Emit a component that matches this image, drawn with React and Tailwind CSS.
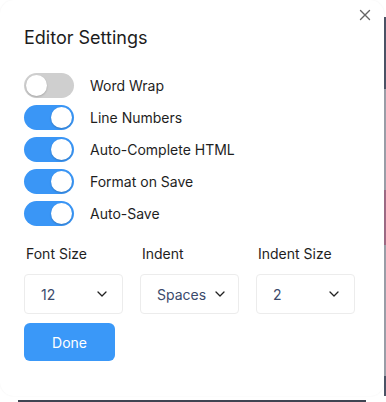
import { useState } from "react";

function Toggle({ on, onClick }) {
  return (
    <button
      type="button"
      onClick={onClick}
      className={`relative h-[25px] w-[50px] shrink-0 rounded-full transition-colors ${
        on ? "bg-[#3a96f6]" : "bg-[#cfcfcf]"
      }`}
    >
      <span
        className={`absolute top-[2px] h-[21px] w-[21px] rounded-full bg-white shadow-[0_1px_2px_rgba(0,0,0,0.2)] transition-all ${
          on ? "left-[27px]" : "left-[2px]"
        }`}
      />
    </button>
  );
}

function Chevron() {
  return (
    <svg className="shrink-0" width="12" height="12" viewBox="0 0 12 12" fill="none" stroke="#222" strokeWidth="1.3" strokeLinecap="round" strokeLinejoin="round">
      <path d="M2 4l4 4 4-4" />
    </svg>
  );
}

function Select({ label, value, valueClass }) {
  return (
    <div className="flex w-[99px] flex-col">
      <div className="mb-[12px] pl-[2px] text-[14px] leading-[16px] text-[#1e1e1e]">{label}</div>
      <div className="flex h-[40px] items-center rounded-[4px] border border-[#ececec] bg-white pr-[14px] pl-[16px]">
        <span className={`text-[14px] text-[#3b4a6b] ${valueClass || "flex-1"}`}>{value}</span>
        <Chevron />
      </div>
    </div>
  );
}

export default function App() {
  const [opts, setOpts] = useState([
    { label: "Word Wrap", on: false },
    { label: "Line Numbers", on: true },
    { label: "Auto-Complete HTML", on: true },
    { label: "Format on Save", on: true },
    { label: "Auto-Save", on: true },
  ]);

  const flip = (i) =>
    setOpts(opts.map((o, j) => (j === i ? { ...o, on: !o.on } : o)));

  return (
    <div
      className="relative h-[402px] w-[386px] overflow-hidden bg-white"
      style={{ fontFamily: "Inter, 'Noto Sans', sans-serif" }}
    >
      {/* page behind the dialog */}
      <div className="absolute top-0 right-0 flex h-[396px] w-[2px] flex-col">
        <div className="h-[17px] bg-white" />
        <div className="h-[72px] bg-[#4b5366]" />
        <div className="h-[101px] bg-[#9a9ea8]" />
        <div className="h-[55px] bg-[#9c6b85]" />
        <div className="flex-1 bg-[#9a9ea8]" />
        <div className="h-[20px] bg-[#4b5366]" />
      </div>
      <div className="absolute bottom-0 left-[18px] h-[2px] w-[348px] bg-[#3f4452]" />

      <div className="relative h-[396px] w-[384px] rounded-[14px] bg-white shadow-[0_0_2px_rgba(0,0,0,0.06)]">
        <button type="button" className="absolute top-[8px] right-[12px] text-[#666]">
          <svg width="14" height="14" viewBox="0 0 14 14" stroke="currentColor" strokeWidth="1.4" strokeLinecap="round">
            <path d="M2.5 2.5l9 9M11.5 2.5l-9 9" />
          </svg>
        </button>

        <div className="px-[24px] pt-[25px]">
          <h2 className="text-[18px] leading-[26px] font-normal text-[#1c1c1c]">Editor Settings</h2>

          <div className="mt-[22px] flex flex-col gap-[7px]">
            {opts.map((o, i) => (
              <div key={o.label} className="flex items-center gap-[16px]">
                <Toggle on={o.on} onClick={() => flip(i)} />
                <span className="text-[14px] text-[#1e1e1e]">{o.label}</span>
              </div>
            ))}
          </div>

          <div className="mt-[20px] flex gap-[17px]">
            <Select label="Font Size" value="12" />
            <Select label="Indent" value="Spaces" valueClass="mr-[8px]" />
            <Select label="Indent Size" value="2" />
          </div>

          <button
            type="button"
            className="mt-[9px] h-[38px] w-[91px] rounded-[6px] bg-[#3a98f8] text-[14px] text-white"
          >
            Done
          </button>
        </div>
      </div>
    </div>
  );
}
